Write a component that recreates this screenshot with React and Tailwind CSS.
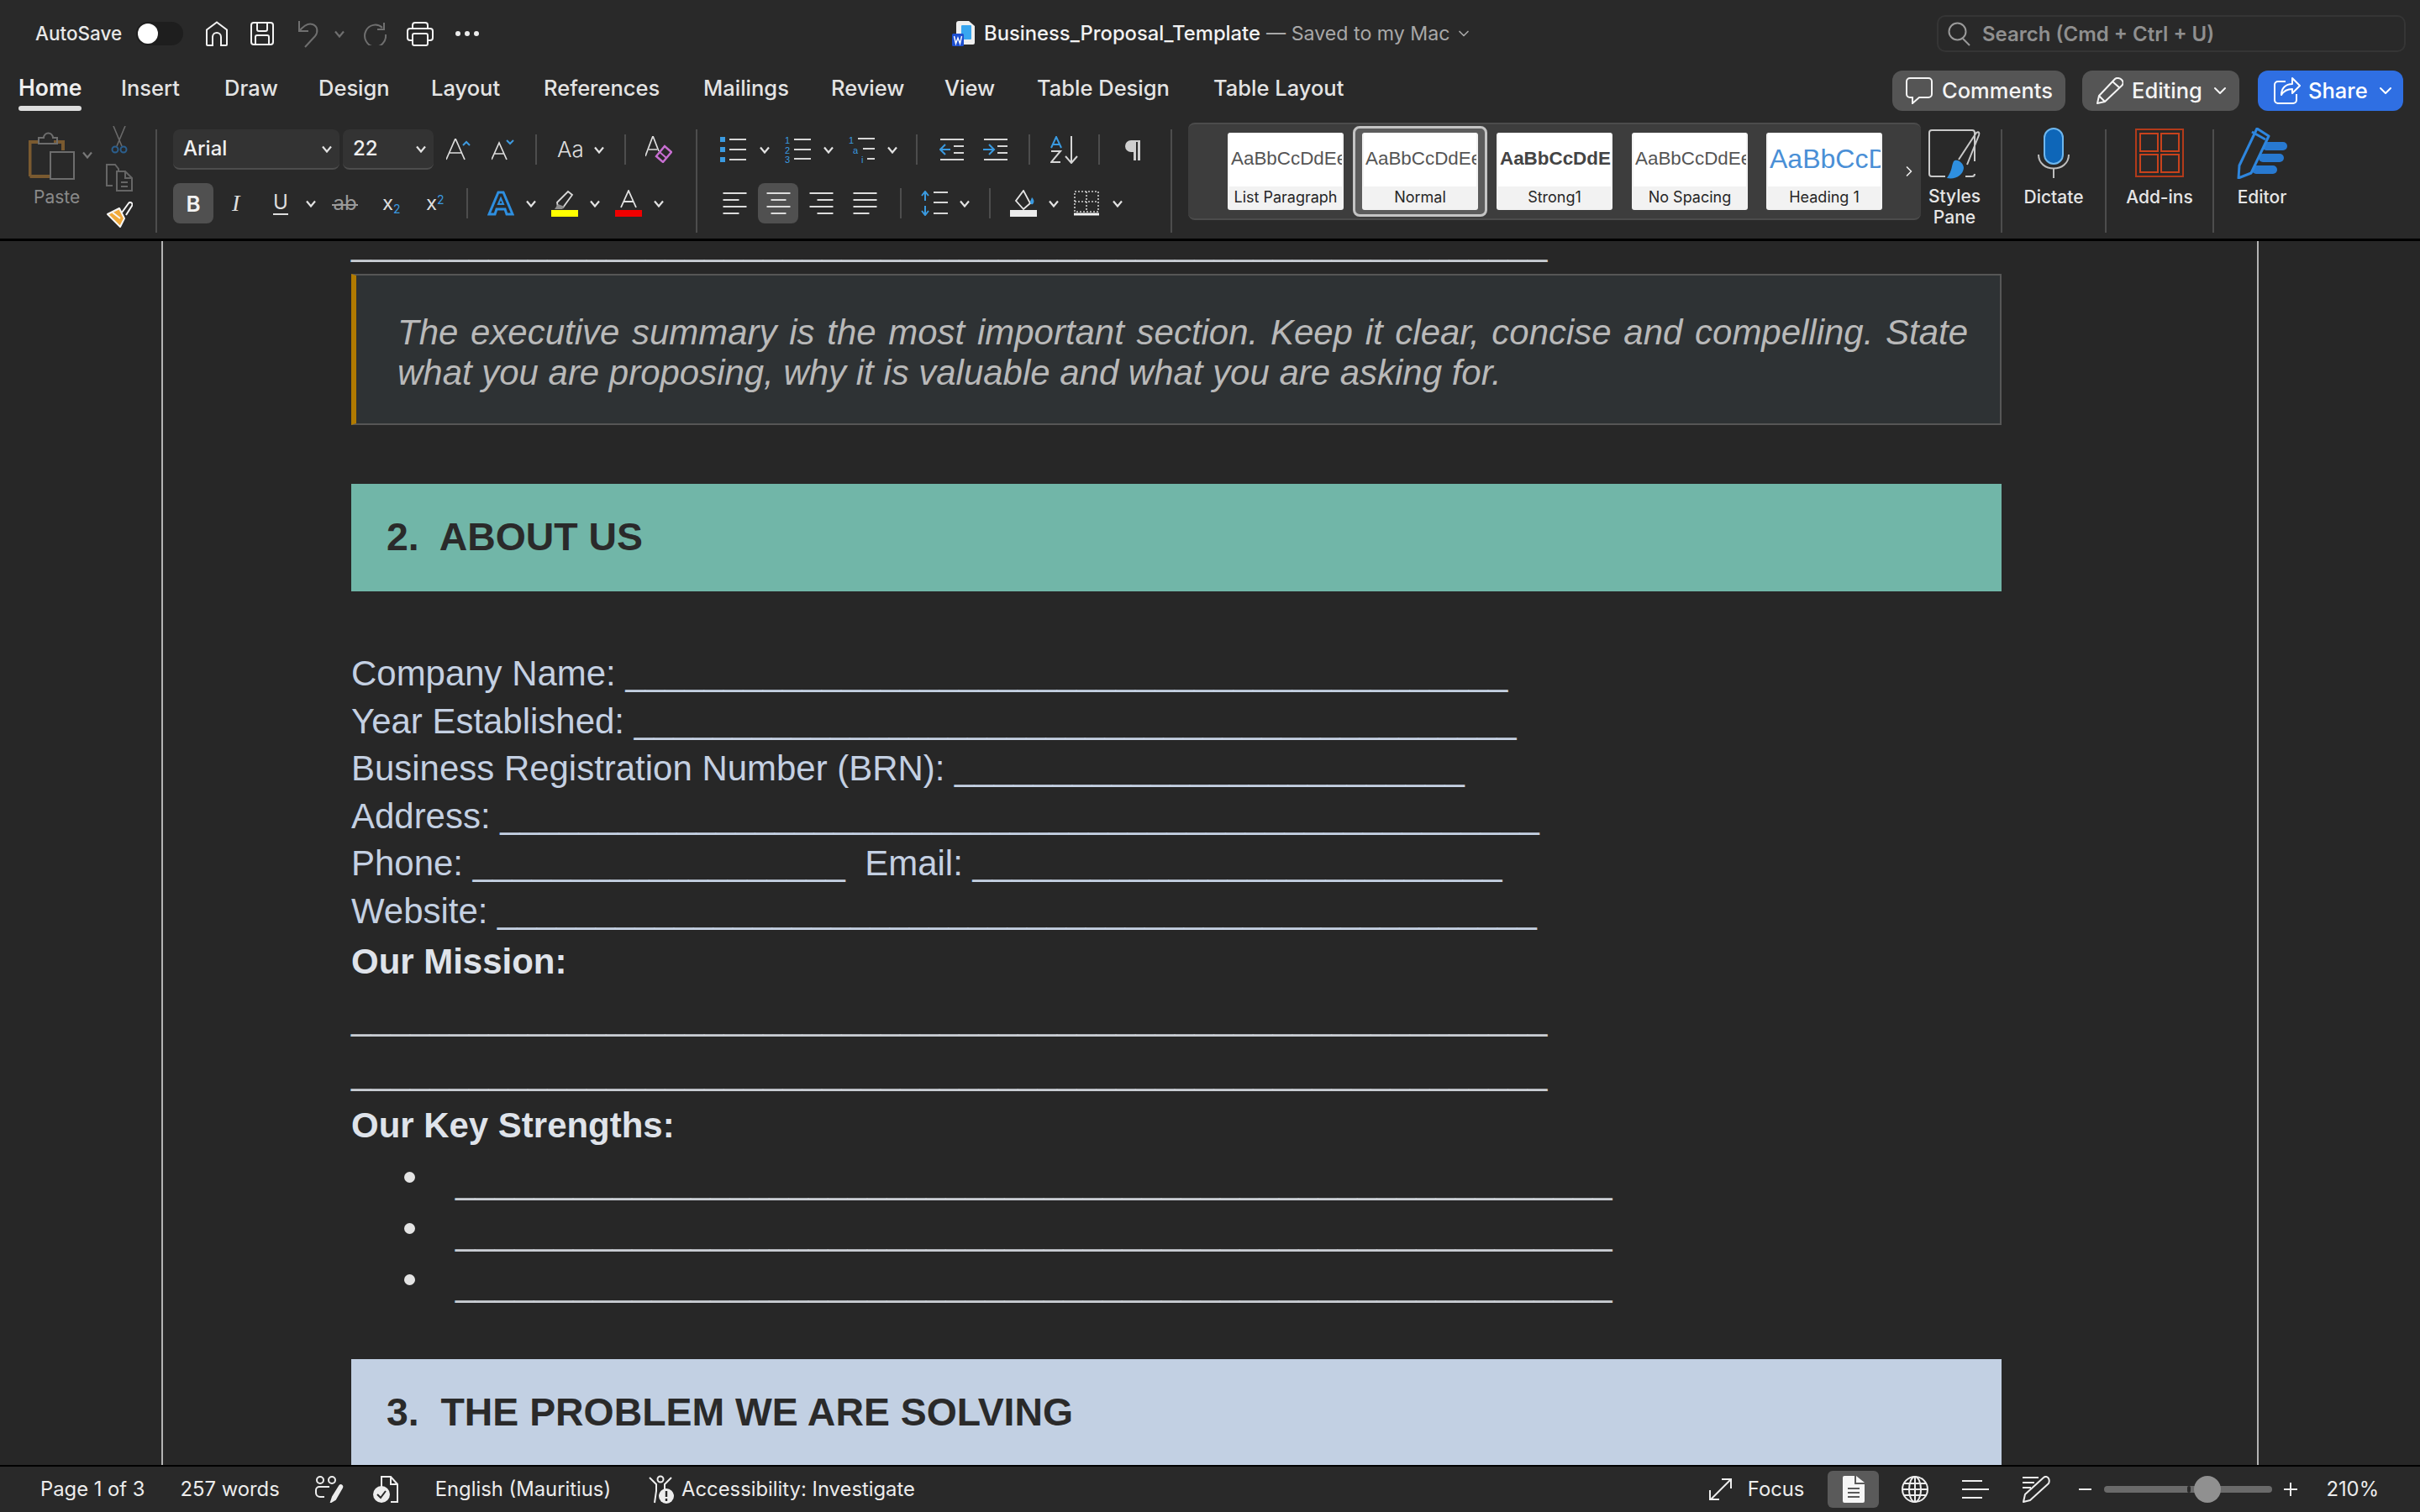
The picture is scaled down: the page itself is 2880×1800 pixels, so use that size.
import { ChevronDown, ChevronRight } from "lucide-react";

const ui = "font-['Inter','Liberation_Sans',sans-serif]";
const doc = "font-['Liberation_Sans','Arial',sans-serif]";

const Chev = ({ className = "", color = "#e2e2e2" }) => (
  <svg width="12" height="9" viewBox="0 0 12 9" className={`shrink-0 ${className}`} fill="none" stroke={color} strokeWidth="2.2">
    <path d="M1 1.5l5 6 5-6" />
  </svg>
);

const Vr = ({ className = "" }) => <div className={`w-[2px] shrink-0 bg-[#4d4d4d] ${className}`} />;

const HomeIcon = () => (
  <svg width="28" height="30" viewBox="0 0 28 30" fill="none" stroke="#f2f2f2" strokeWidth="2" className="ml-[26px]">
    <path d="M2 28V10.5L14 1.5l12 9V28a1 1 0 0 1-1 1h-6V19a5 5 0 0 0-10 0v10H3a1 1 0 0 1-1-1z" />
  </svg>
);
const SaveIcon = () => (
  <svg width="28" height="28" viewBox="0 0 28 28" fill="none" stroke="#f2f2f2" strokeWidth="2" className="ml-[26px]">
    <rect x="1" y="1" width="26" height="26" rx="3" />
    <path d="M8 1v8a2 2 0 0 0 2 2h8a2 2 0 0 0 2-2V1M6 27v-9a2 2 0 0 1 2-2h12a2 2 0 0 1 2 2v9" />
  </svg>
);
const UndoIcon = () => (
  <svg width="26" height="33" viewBox="0 0 26 33" fill="none" stroke="#6f6f6f" strokeWidth="2" className="ml-[28px]">
    <path d="M2 1v12h11M2 13C8 6 13 3 18 5c6 2 7 9 3 14L9 32" />
  </svg>
);
const RedoIcon = () => (
  <svg width="28" height="28" viewBox="0 0 28 28" fill="none" stroke="#6f6f6f" strokeWidth="2" className="ml-[22px]">
    <path d="M23 7a12.5 13 0 1 0 4 8M25 1v8h-8" />
  </svg>
);
const PrintIcon = () => (
  <svg width="32" height="29" viewBox="0 0 32 29" fill="none" stroke="#f2f2f2" strokeWidth="2" className="ml-[24px]">
    <path d="M7 8V4a3 3 0 0 1 3-3h12a3 3 0 0 1 3 3v4" />
    <path d="M7 22H4a3 3 0 0 1-3-3v-8a3 3 0 0 1 3-3h24a3 3 0 0 1 3 3v8a3 3 0 0 1-3 3h-3" />
    <rect x="7" y="14" width="18" height="14" rx="2" />
  </svg>
);
const WordIcon = () => (
  <svg width="27" height="30" viewBox="0 0 27 30" className="shrink-0">
    <path d="M5 3a3 3 0 0 1 3-3h12l7 6v20a2 2 0 0 1-2 2H5z" fill="#efefef" />
    <rect x="11" y="5" width="12" height="17" rx="1" fill="#38a6f0" />
    <rect x="0" y="15" width="14" height="15" rx="1.5" fill="#1d4fd0" />
    <path d="M2.5 18l2 9 2.5-7 2.5 7 2-9" fill="none" stroke="#fff" strokeWidth="1.4" />
  </svg>
);

const PasteIcon = () => (
  <svg width="56" height="60" viewBox="0 0 56 60" fill="none">
    <path d="M1.5 56V15h10M30 15h11v10M1.5 56H25" stroke="#7a5a30" strokeWidth="4" />
    <path d="M12 17v-7h6a5.5 5.5 0 0 1 11 0h5v7z" stroke="#6d6d6d" strokeWidth="2" />
    <rect x="26" y="27" width="28" height="32" stroke="#6d6d6d" strokeWidth="2" />
  </svg>
);
const CutIcon = () => (
  <svg width="20" height="33" viewBox="0 0 20 33" fill="none" strokeWidth="1.6">
    <path d="M3 0l10 24M17 0L7 24" stroke="#6a6a6a" />
    <circle cx="5" cy="28" r="3.5" stroke="#2b5f8e" strokeWidth="2" />
    <circle cx="15" cy="28" r="3.5" stroke="#2b5f8e" strokeWidth="2" />
  </svg>
);
const CopyIcon = () => (
  <svg width="32" height="33" viewBox="0 0 32 33" fill="none" stroke="#666" strokeWidth="2">
    <path d="M8 26H1V1h10l4 5v3" />
    <path d="M13 9h10l8 8v15H13zM23 9v8h8M18 22h8M18 27h8" />
  </svg>
);
const PainterIcon = () => (
  <svg width="32" height="31" viewBox="0 0 32 31">
    <path d="M2 15L16 8l6 12-5 10z" fill="#f0a93a" stroke="#f5f5f5" strokeWidth="2" strokeLinejoin="round" />
    <path d="M8 13l9 7" stroke="#f5f5f5" strokeWidth="2" />
    <path d="M19 13L27 2a2.5 2.5 0 0 1 4 3l-7 11" fill="none" stroke="#f5f5f5" strokeWidth="2" />
  </svg>
);

const GrowIcon = ({ down, className = "" }) => (
  <svg width={down ? 27 : 29} height="26" viewBox={down ? "0 0 27 26" : "0 0 29 26"} fill="none" className={className}>
    {down ? (
      <>
        <path d="M0 25L9 5l9 20M3.5 18h11" stroke="#dedede" strokeWidth="1.7" />
        <path d="M18 2l4 4 4-4" stroke="#3f9be0" strokeWidth="2" />
      </>
    ) : (
      <>
        <path d="M0 25L11 0l11 25M4 17h14" stroke="#dedede" strokeWidth="1.7" />
        <path d="M20 8l4-4 4 4" stroke="#3f9be0" strokeWidth="2" />
      </>
    )}
  </svg>
);
const ClearIcon = ({ className = "" }) => (
  <svg width="32" height="32" viewBox="0 0 32 32" fill="none" className={className}>
    <path d="M0 24L9 0l7 18M4 16h10" stroke="#dedede" strokeWidth="1.7" />
    <path d="M13 24L23 12l8 7-10 12z" stroke="#c86fd2" strokeWidth="2.4" />
    <path d="M17 19l8 7" stroke="#c86fd2" strokeWidth="2" />
  </svg>
);

const BulletIcon = ({ className = "" }) => (
  <svg width="31" height="30" viewBox="0 0 31 30" className={className}>
    <rect x="0" y="0" width="6" height="6" fill="#3a9ae0" />
    <rect x="0" y="12" width="6" height="6" fill="#3a9ae0" />
    <rect x="0" y="24" width="6" height="6" fill="#3a9ae0" />
    <path d="M11 3h20M11 15h20M11 27h20" stroke="#d6d6d6" strokeWidth="2" />
  </svg>
);
const NumberIcon = ({ className = "" }) => (
  <svg width="31" height="32" viewBox="0 0 31 32" className={className}>
    <text x="0" y="9" fontSize="11" fill="#3a9ae0" fontFamily="Liberation Sans">1</text>
    <text x="0" y="21" fontSize="11" fill="#3a9ae0" fontFamily="Liberation Sans">2</text>
    <text x="0" y="32" fontSize="11" fill="#3a9ae0" fontFamily="Liberation Sans">3</text>
    <path d="M11 4h20M11 16h20M11 27h20" stroke="#d6d6d6" strokeWidth="2" />
  </svg>
);
const MultiIcon = ({ className = "" }) => (
  <svg width="31" height="32" viewBox="0 0 31 32" className={className}>
    <text x="0" y="9" fontSize="11" fill="#3a9ae0" fontFamily="Liberation Sans">1</text>
    <text x="5" y="21" fontSize="11" fill="#3a9ae0" fontFamily="Liberation Sans">a</text>
    <text x="15" y="32" fontSize="11" fill="#3a9ae0" fontFamily="Liberation Sans">i</text>
    <path d="M11 3h20M17 15h14M22 27h9" stroke="#d6d6d6" strokeWidth="2" />
  </svg>
);
const IndentIcon = ({ inc, className = "" }) => (
  <svg width="29" height="28" viewBox="0 0 29 28" fill="none" className={className}>
    <path d="M1 2h28M17 10h12M17 18h12M1 26h28" stroke="#d6d6d6" strokeWidth="2" />
    {inc ? (
      <path d="M0 14h12M7 8l6 6-6 6" stroke="#3a9ae0" strokeWidth="2" />
    ) : (
      <path d="M13 14H1M7 8l-6 6 6 6" stroke="#3a9ae0" strokeWidth="2" />
    )}
  </svg>
);
const SortIcon = ({ className = "" }) => (
  <svg width="33" height="33" viewBox="0 0 33 33" fill="none" className={className}>
    <path d="M1 14L7 1l6 13M3 10h8" stroke="#3a9ae0" strokeWidth="2" />
    <path d="M1 18h11L1 31h11" stroke="#d6d6d6" strokeWidth="2" />
    <path d="M25 0v31M18 24l7 8 7-8" stroke="#d6d6d6" strokeWidth="2" />
  </svg>
);
const Pilcrow = ({ className = "" }) => (
  <svg width="20" height="25" viewBox="0 0 20 25" className={className}>
    <path d="M19 1H8a7 7 0 0 0 0 14h3v10h3V3h2v22h3z" fill="#cfcfcf" />
  </svg>
);
const AlignIcon = ({ mode, className = "" }) => {
  const paths = {
    left: "M0 2h28M0 10h19M0 18h28M0 26h19",
    center: "M0 2h28M5 10h18M0 18h28M5 26h18",
    right: "M0 2h28M9 10h19M0 18h28M9 26h19",
    justify: "M0 2h28M0 10h28M0 18h28M0 26h19",
  };
  return (
    <svg width="29" height="28" viewBox="0 0 28 28" fill="none" stroke="#dcdcdc" strokeWidth="2" className={className}>
      <path d={paths[mode]} />
    </svg>
  );
};
const SpacingIcon = ({ className = "" }) => (
  <svg width="32" height="30" viewBox="0 0 32 30" fill="none" className={className}>
    <path d="M15 2h17M15 14h17M15 27h17" stroke="#d6d6d6" strokeWidth="2" />
    <path d="M5 1v11M1 6l4-5 4 5M5 18v11M1 24l4 5 4-5" stroke="#3a9ae0" strokeWidth="2" />
  </svg>
);
const ShadingIcon = ({ className = "" }) => (
  <svg width="32" height="32" viewBox="0 0 32 32" fill="none" className={className}>
    <path d="M16 1l8 15-8 7-9-10z" stroke="#e6e6e6" strokeWidth="1.8" />
    <path d="M26 9c3 3 3 6 1 8-2 1-3-1-3-3z" fill="#3a9ae0" />
    <rect x="0" y="24" width="32" height="8" fill="#ececec" />
  </svg>
);
const BorderIcon = ({ className = "" }) => (
  <svg width="30" height="30" viewBox="0 0 30 30" fill="none" className={className}>
    <rect x="1" y="1" width="28" height="24" stroke="#cfcfcf" strokeWidth="1.6" strokeDasharray="2 2" />
    <path d="M15 1v24M1 13h28" stroke="#cfcfcf" strokeWidth="1.6" strokeDasharray="2 2" />
    <path d="M0 28h30" stroke="#f2f2f2" strokeWidth="3" />
  </svg>
);
const TextFx = ({ className = "" }) => (
  <svg width="32" height="30" viewBox="0 0 32 30" fill="none" className={className}>
    <path d="M2 28L13 2h6l11 26h-7l-2-6H11l-2 6z" stroke="#2e8fe0" strokeWidth="3" />
    <path d="M13 16l3-7 3 7z" stroke="#2e8fe0" strokeWidth="2" />
  </svg>
);
const Highlight = ({ className = "" }) => (
  <svg width="34" height="32" viewBox="0 0 34 32" fill="none" className={className}>
    <path d="M8 15L21 2l5 4-11 15H9z" stroke="#d8d8d8" strokeWidth="1.8" />
    <path d="M9 17l-4 6h9l3-3z" fill="#8d8d8d" />
    <rect x="1" y="24" width="32" height="8" fill="#ffff00" />
  </svg>
);
const FontColor = ({ className = "" }) => (
  <svg width="32" height="32" viewBox="0 0 32 32" fill="none" className={className}>
    <path d="M7 21L16 1l9 20M10 14h12" stroke="#e2e2e2" strokeWidth="1.8" />
    <rect x="0" y="24" width="32" height="8" fill="#f00000" />
  </svg>
);
const StylesIcon = () => (
  <svg width="62" height="60" viewBox="0 0 62 60" fill="none">
    <path d="M20 56H4a3 3 0 0 1-3-3V4a3 3 0 0 1 3-3h48a3 3 0 0 1 3 3v34M44 56h8a3 3 0 0 0 3-3" stroke="#c9c9c9" strokeWidth="2" />
    <path d="M36 36L57 4c3-2 4 0 3 3L46 42" stroke="#c9c9c9" strokeWidth="2" />
    <path d="M30 38c-3 6-1 10-8 20 10 2 19-3 20-12 0-6-8-12-12-8z" fill="#2e8fe0" />
  </svg>
);
const MicIcon = () => (
  <svg width="38" height="60" viewBox="0 0 38 60" fill="none">
    <rect x="8" y="1" width="22" height="42" rx="11" fill="#0e66b8" stroke="#6fb7ee" strokeWidth="2" />
    <path d="M1 32c0 22 36 22 36 0M19 48v12" stroke="#bdbdbd" strokeWidth="2" />
  </svg>
);
const AddinsIcon = () => (
  <svg width="58" height="58" viewBox="0 0 58 58" fill="none">
    <rect x="1" y="1" width="56" height="56" stroke="#b23a1a" strokeWidth="2" />
    <rect x="6" y="6" width="21" height="21" stroke="#c8421c" strokeWidth="2" />
    <rect x="31" y="6" width="21" height="21" stroke="#c8421c" strokeWidth="2" />
    <rect x="6" y="31" width="21" height="21" stroke="#c8421c" strokeWidth="2" />
    <rect x="31" y="31" width="21" height="21" stroke="#c8421c" strokeWidth="2" />
  </svg>
);
const EditorIcon = () => (
  <svg width="60" height="61" viewBox="0 0 60 61" fill="none">
    <rect x="30" y="17" width="30" height="10" rx="5" fill="#2879d0" />
    <rect x="26" y="31" width="30" height="10" rx="5" fill="#2879d0" />
    <rect x="18" y="45" width="30" height="10" rx="5" fill="#2879d0" />
    <path d="M2 60L3 45 24 1l14 9-21 44z" fill="#292929" stroke="#2e86de" strokeWidth="3" strokeLinejoin="round" />
    <path d="M18 5l16 9" stroke="#2e86de" strokeWidth="3" />
  </svg>
);
const CommentIcon = () => (
  <svg width="32" height="32" viewBox="0 0 32 32" fill="none" stroke="#f4f4f4" strokeWidth="2" className="shrink-0">
    <path d="M5 1h22a4 4 0 0 1 4 4v15a4 4 0 0 1-4 4H16l-8 7v-7H5a4 4 0 0 1-4-4V5a4 4 0 0 1 4-4z" />
  </svg>
);
const PencilIcon = () => (
  <svg width="32" height="32" viewBox="0 0 32 32" fill="none" stroke="#f4f4f4" strokeWidth="2" strokeLinejoin="round" className="shrink-0">
    <path d="M1 31l2-9L22 2c2-2 6-1 8 1s2 5 0 7L10 29zM19 5l9 8M3 22l7 7" />
  </svg>
);
const ShareIcon = () => (
  <svg width="32" height="32" viewBox="0 0 32 32" fill="none" stroke="#fff" strokeWidth="2" strokeLinejoin="round" className="shrink-0">
    <path d="M14 5H5a4 4 0 0 0-4 4v18a4 4 0 0 0 4 4h18a4 4 0 0 0 4-4v-7" />
    <path d="M22 1l9 9-9 9v-5c-6 0-10 2-13 7 0-8 5-13 13-13z" />
  </svg>
);
const SearchIcon = () => (
  <svg width="27" height="29" viewBox="0 0 27 29" fill="none" stroke="#9a9a9a" strokeWidth="2">
    <circle cx="11.5" cy="11.5" r="10" />
    <path d="M18 20l8 8" />
  </svg>
);

const TrackIcon = () => (
  <svg width="34" height="32" viewBox="0 0 34 32" fill="none" stroke="#ededed" strokeWidth="2">
    <circle cx="6" cy="5" r="4" />
    <circle cx="20" cy="5" r="4" />
    <path d="M17 13H5a4 4 0 0 0-4 4v3a5 5 0 0 0 5 5h5" />
    <path d="M19 31l2-6 8-13c2-2 4 0 3 2l-8 14z" fill="#ededed" />
  </svg>
);
const SpellIcon = () => (
  <svg width="30" height="32" viewBox="0 0 30 32" fill="none">
    <path d="M10 15V1h11l8 9v21h-8M21 1v9h8" stroke="#ededed" strokeWidth="2" />
    <circle cx="10" cy="22" r="10" fill="#ededed" />
    <path d="M5 22l4 4 6-8" stroke="#292929" strokeWidth="2" />
  </svg>
);
const AccessIcon = () => (
  <svg width="32" height="34" viewBox="0 0 32 34" fill="none">
    <circle cx="15" cy="5" r="3.5" stroke="#ededed" strokeWidth="2" />
    <path d="M2 3l8 8v8l-2 14M28 3l-8 8v6" stroke="#ededed" strokeWidth="2" />
    <circle cx="22" cy="25" r="9" fill="#ededed" />
    <path d="M22 19v7M22 28v3" stroke="#292929" strokeWidth="2.4" />
  </svg>
);
const FocusIcon = () => (
  <svg width="27" height="26" viewBox="0 0 27 26" fill="none" stroke="#ededed" strokeWidth="2">
    <path d="M2 25L25 2M15 1h11v11M1 14v11h11" />
  </svg>
);
const PageIcon = () => (
  <svg width="26" height="32" viewBox="0 0 26 32">
    <path d="M2 0h12v10h12v20a2 2 0 0 1-2 2H2a2 2 0 0 1-2-2V2a2 2 0 0 1 2-2z" fill="#f6f6f6" />
    <path d="M16 0l10 8H16z" fill="#f6f6f6" />
    <path d="M6 15h14M6 20h14M6 25h14" stroke="#5a5a5a" strokeWidth="2" />
  </svg>
);
const GlobeIcon = () => (
  <svg width="32" height="32" viewBox="0 0 32 32" fill="none" stroke="#ededed" strokeWidth="2">
    <circle cx="16" cy="16" r="15" />
    <ellipse cx="16" cy="16" rx="7" ry="15" />
    <path d="M16 1v30M3 9h26M1 16h30M3 23h26" />
  </svg>
);
const OutlineIcon = () => (
  <svg width="33" height="24" viewBox="0 0 33 24" fill="none" stroke="#ededed" strokeWidth="2">
    <path d="M1 2h24M1 12h33M1 22h24" />
  </svg>
);
const DraftIcon = () => (
  <svg width="33" height="32" viewBox="0 0 33 32" fill="none" stroke="#ededed" strokeWidth="2" strokeLinejoin="round">
    <path d="M0 2h19M0 8h14M0 14h10M1 31l2-9L25 2c2-2 5-1 6 1s1 4 0 6L9 29z" />
  </svg>
);

// fixed tab slots, the labels start where the reference's start
const tabs = [
  ["Insert", "w-[123px]"],
  ["Draw", "w-[112px]"],
  ["Design", "w-[134px]"],
  ["Layout", "w-[134px]"],
  ["References", "w-[190px]"],
  ["Mailings", "w-[152px]"],
  ["Review", "w-[135px]"],
  ["View", "w-[110px]"],
  ["Table Design", "w-[210px]"],
  ["Table Layout", "w-[170px]"],
];

const StyleCard = ({ preview, label, previewClass }) => (
  <div className="flex h-[92px] w-[138px] flex-col overflow-hidden rounded-[3px] bg-[#f2f2f2]">
    <div className="mx-[2px] flex h-[64px] items-center justify-start overflow-hidden whitespace-nowrap bg-white pb-[2px] pl-[2px]">
      <span className={`${doc} ${previewClass}`}>{preview}</span>
    </div>
    <div className="flex-1 whitespace-nowrap text-center text-[18px] leading-[26px] text-[#262626]">{label}</div>
  </div>
);

const Underscores = ({ n }) => "_".repeat(n);

const Heading = ({ children, className = "" }) => (
  <div className={`flex h-[128px] shrink-0 items-center whitespace-pre pl-[42px] text-[46.4px] font-bold text-[#2a2a2a] ${className}`}>
    {children}
  </div>
);

const Line = ({ children, className = "" }) => (
  <p className={`whitespace-pre leading-[56.5px] ${className}`}>{children}</p>
);

const Bullet = ({ className = "" }) => (
  <div className={`flex h-[56px] pl-[63px] ${className}`}>
    <div className="mt-[16px] h-[13px] w-[13px] shrink-0 rounded-full bg-[#e4e4e4]" />
    <span className="ml-[48px] whitespace-pre leading-[56px] text-[#c9cdd3]">
      <Underscores n={59} />
    </span>
  </div>
);

export default function App() {
  return (
    <div className={`${ui} flex h-[1800px] w-[2880px] flex-col overflow-hidden bg-[#292929] text-[#e6e6e6]`}>
      {/* title bar */}
      <div className="flex h-[80px] shrink-0 items-center">
        <span className="ml-[42px] w-[101px] whitespace-nowrap text-[22.5px] font-medium text-[#e8e8e8]">AutoSave</span>
        <div className="ml-[19px] flex h-[28px] w-[56px] items-center rounded-full bg-[#1e1e1e] pl-[2px]">
          <div className="h-[24px] w-[24px] rounded-full bg-white" />
        </div>
        <HomeIcon />
        <SaveIcon />
        <UndoIcon />
        <Chev className="ml-[18px]" color="#6f6f6f" />
        <RedoIcon />
        <PrintIcon />
        <div className="ml-[26px] flex gap-[5px]">
          <div className="h-[6px] w-[6px] rounded-full bg-[#ececec]" />
          <div className="h-[6px] w-[6px] rounded-full bg-[#ececec]" />
          <div className="h-[6px] w-[6px] rounded-full bg-[#ececec]" />
        </div>
        <div className="ml-[563px] flex items-center">
          <WordIcon />
          <span className="ml-[11px] whitespace-nowrap text-[23.8px] font-medium text-[#f2f2f2]">Business_Proposal_Template</span>
          <span className="ml-[7px] whitespace-nowrap text-[23.2px] text-[#a8a8a8]">— Saved to my Mac</span>
          <ChevronDown size={20} className="ml-[6px] text-[#a8a8a8]" />
        </div>
        <div className="ml-auto mr-[17px] flex h-[44px] w-[558px] items-center rounded-[10px] border-2 border-[#353535] pl-[11px]">
          <SearchIcon />
          <span className="ml-[14px] mt-[2px] text-[24px] font-semibold text-[#8f8f8f]">Search (Cmd + Ctrl + U)</span>
        </div>
      </div>

      {/* tabs */}
      <div className="flex h-[60px] shrink-0 items-center pb-[10px]">
        <div className="ml-[22px] w-[122px] shrink-0">
          <div className="relative inline-block text-[26.5px] font-semibold text-[#efefef]">
            Home
            <div className="absolute -bottom-[7px] left-0 right-0 h-[6px] rounded-full bg-[#dedede]" />
          </div>
        </div>
        {tabs.map(([t, cls]) => (
          <span key={t} className={`${cls} shrink-0 whitespace-nowrap text-[25.5px] font-medium text-[#e4e4e4]`}>{t}</span>
        ))}
        <div className="ml-auto mr-[20px] mt-[4px] flex items-center self-start">
          <button className="flex h-[48px] w-[206px] items-center rounded-[12px] bg-[#555555] pl-[16px] text-[25.5px] font-medium text-[#f4f4f4]">
            <CommentIcon />
            <span className="ml-[11px]">Comments</span>
          </button>
          <button className="ml-[20px] flex h-[48px] w-[187px] items-center rounded-[12px] bg-[#555555] pl-[17px] text-[25.5px] font-medium text-[#f4f4f4]">
            <PencilIcon />
            <span className="ml-[10px]">Editing</span>
            <ChevronDown size={24} className="ml-[9px]" />
          </button>
          <button className="ml-[22px] flex h-[48px] w-[173px] items-center rounded-[12px] bg-[#2f6fe3] pl-[19px] text-[25.5px] font-medium text-white">
            <ShareIcon />
            <span className="ml-[9px]">Share</span>
            <ChevronDown size={24} className="ml-[9px]" />
          </button>
        </div>
      </div>

      {/* ribbon */}
      <div className="flex h-[144px] shrink-0 items-start text-[#e2e2e2]">
        {/* clipboard */}
        <div className="flex w-[185px] shrink-0">
          <div className="ml-[34px] mt-[14px] flex w-[92px] flex-col">
            <div className="flex items-center">
              <PasteIcon />
              <Chev className="ml-[8px]" color="#777777" />
            </div>
            <span className="ml-[6px] mt-[8px] text-[21px] leading-[26px] text-[#8a8a8a]">Paste</span>
          </div>
          <div className="mt-[10px] flex w-[32px] flex-col items-center gap-[12px]">
            <CutIcon />
            <CopyIcon />
            <PainterIcon />
          </div>
        </div>
        <Vr className="mt-[14px] h-[123px]" />

        {/* font */}
        <div className="ml-[19px] mt-[14px] flex w-[622px] shrink-0 flex-col gap-[16px]">
          <div className="flex h-[48px] items-center">
            <div className="flex h-[48px] w-[198px] items-center justify-between rounded-[8px] border-b-2 border-[#4d4d4d] bg-[#333333] pl-[12px] pr-[9px]">
              <span className="text-[24px] font-medium text-[#f0f0f0]">Arial</span>
              <Chev />
            </div>
            <div className="ml-[4px] flex h-[48px] w-[108px] items-center justify-between rounded-[8px] border-b-2 border-[#4d4d4d] bg-[#333333] pl-[12px] pr-[9px]">
              <span className="text-[24px] font-medium text-[#f0f0f0]">22</span>
              <Chev />
            </div>
            <GrowIcon className="ml-[15px]" />
            <GrowIcon down className="ml-[25px]" />
            <Vr className="ml-[25px] h-[36px]" />
            <span className={`${ui} ml-[24px] w-[32px] text-[26px] font-light leading-none text-[#dedede]`}>Aa</span>
            <Chev className="ml-[12px]" />
            <Vr className="ml-[24px] h-[36px]" />
            <ClearIcon className="ml-[23px]" />
          </div>
          <div className="flex h-[48px] items-center">
            <div className={`${ui} flex h-[48px] w-[48px] items-center justify-center rounded-[8px] bg-[#505050] text-[26px] font-semibold text-[#f2f2f2]`}>B</div>
            <span className="ml-[22px] w-[15px] font-['Liberation_Serif',serif] text-[28px] italic text-[#dedede]">I</span>
            <span className="ml-[34px] w-[18px] border-b-2 border-[#dedede] text-center text-[24px] leading-[26px] text-[#dedede]">U</span>
            <Chev className="ml-[21px]" />
            <span className="relative ml-[19px] w-[31px] text-center text-[24px] leading-[28px] text-[#9a9a9a]">
              ab
              <span className="absolute left-0 right-0 top-[15px] h-[2px] bg-[#9a9a9a]" />
            </span>
            <span className="ml-[29px] w-[23px] text-[24px] text-[#dedede]">
              x<sub className="text-[14px] text-[#3a9ae0]">2</sub>
            </span>
            <span className="ml-[29px] w-[23px] text-[24px] text-[#dedede]">
              x<sup className="text-[14px] text-[#3a9ae0]">2</sup>
            </span>
            <Vr className="ml-[25px] h-[36px]" />
            <TextFx className="ml-[23px]" />
            <Chev className="ml-[14px]" />
            <Highlight className="ml-[17px]" />
            <Chev className="ml-[13px]" />
            <FontColor className="ml-[18px]" />
            <Chev className="ml-[14px]" />
          </div>
        </div>
        <Vr className="mt-[14px] h-[123px]" />

        {/* paragraph */}
        <div className="ml-[27px] mt-[14px] flex w-[536px] shrink-0 flex-col gap-[16px]">
          <div className="flex h-[48px] items-center">
            <BulletIcon />
            <Chev className="ml-[16px]" />
            <NumberIcon className="ml-[18px]" />
            <Chev className="ml-[15px]" />
            <MultiIcon className="ml-[18px]" />
            <Chev className="ml-[15px]" />
            <Vr className="ml-[22px] h-[36px]" />
            <IndentIcon className="ml-[26px]" />
            <IndentIcon inc className="ml-[23px]" />
            <Vr className="ml-[25px] h-[36px]" />
            <SortIcon className="ml-[24px]" />
            <Vr className="ml-[24px] h-[36px]" />
            <Pilcrow className="ml-[29px]" />
          </div>
          <div className="flex h-[48px] items-center">
            <AlignIcon mode="left" className="ml-[3px]" />
            <div className="ml-[13px] flex h-[48px] w-[48px] items-center justify-center rounded-[8px] bg-[#505050]">
              <AlignIcon mode="center" />
            </div>
            <AlignIcon mode="right" className="ml-[13px]" />
            <AlignIcon mode="justify" className="ml-[23px]" />
            <Vr className="ml-[27px] h-[36px]" />
            <SpacingIcon className="ml-[23px]" />
            <Chev className="ml-[14px]" />
            <Vr className="ml-[23px] h-[36px]" />
            <ShadingIcon className="ml-[23px]" />
            <Chev className="ml-[14px]" />
            <BorderIcon className="ml-[18px]" />
            <Chev className="ml-[16px]" />
          </div>
        </div>
        <Vr className="mt-[14px] h-[123px]" />

        {/* styles gallery */}
        <div className="ml-[19px] mt-[6px] flex h-[116px] w-[872px] shrink-0 items-center rounded-[8px] border-t-2 border-b-2 border-[#4c4c4c] bg-[#3d3d3d] pl-[47px]">
          <StyleCard preview="AaBbCcDdEe" label="List Paragraph" previewClass="text-[22.4px] text-[#555555]" />
          <div className="ml-[11px] flex h-[108px] w-[160px] items-center justify-center rounded-[8px] border-[3px] border-[#c4c4c4] bg-[#5c5c5c]">
            <StyleCard preview="AaBbCcDdEe" label="Normal" previewClass="text-[22.4px] text-[#555555]" />
          </div>
          <div className="ml-[11px]">
            <StyleCard preview="AaBbCcDdEe" label="Strong1" previewClass="text-[22.4px] font-bold text-[#444444]" />
          </div>
          <div className="ml-[23px]">
            <StyleCard preview="AaBbCcDdEe" label="No Spacing" previewClass="text-[22.4px] text-[#555555]" />
          </div>
          <div className="ml-[22px]">
            <StyleCard preview="AaBbCcDd" label="Heading 1" previewClass="text-[32px] text-[#4a8fd6]" />
          </div>
          <ChevronRight size={20} className="ml-[22px] text-[#eeeeee]" />
        </div>

        {/* big buttons */}
        <div className="ml-[10px] mt-[14px] flex w-[60px] shrink-0 flex-col items-center">
          <StylesIcon />
          <span className="mt-[8px] whitespace-nowrap text-center text-[21px] font-medium leading-[24.5px] text-[#e6e6e6]">Styles<br />Pane</span>
        </div>
        <Vr className="ml-[25px] mt-[14px] h-[123px]" />
        <div className="mt-[12px] flex w-[122px] shrink-0 flex-col items-center">
          <MicIcon />
          <span className="mt-[11px] text-[21px] font-medium leading-[24px] text-[#e6e6e6]">Dictate</span>
        </div>
        <Vr className="mt-[14px] h-[123px]" />
        <div className="mt-[13px] flex w-[126px] shrink-0 flex-col items-center">
          <AddinsIcon />
          <span className="mt-[12px] text-[21px] font-medium leading-[24px] text-[#e6e6e6]">Add-ins</span>
        </div>
        <Vr className="mt-[14px] h-[123px]" />
        <div className="ml-[27px] mt-[12px] flex w-[60px] shrink-0 flex-col items-center">
          <EditorIcon />
          <span className="mt-[10px] text-[21px] font-medium leading-[24px] text-[#e6e6e6]">Editor</span>
        </div>
      </div>

      {/* document */}
      <div className="h-[3px] shrink-0 bg-black" />
      <div className={`${doc} min-h-0 flex-1 overflow-hidden bg-[#272727]`}>
        <div className="ml-[192px] h-full w-[2496px] border-x-2 border-[#b4b4b4] pl-[224px] pr-[304px] text-[41.96px] text-[#c4d0e2]">
          <div className="flex flex-col">
            <p className="-mt-[21px] whitespace-pre leading-[48px] text-[#c9cdd3]"><Underscores n={61} /></p>

            <div className="mt-[12px] h-[180px] border-2 border-l-[6px] border-[#565656] border-l-[#b07a00] bg-[#2e3234] pl-[49px] pr-[38px] pt-[44px]">
              <p className="text-justify italic leading-[48px] text-[#b9b9b9]">
                The executive summary is the most important section. Keep it clear, concise and compelling. State what you are proposing, why it is valuable and what you are asking for.
              </p>
            </div>

            <Heading className="mt-[70px] bg-[#71b6a8]">{"2.  ABOUT US"}</Heading>

            <div className="mt-[70px]">
              <Line>Company Name: <Underscores n={45} /></Line>
              <Line>Year Established: <Underscores n={45} /></Line>
              <Line>Business Registration Number (BRN): <Underscores n={26} /></Line>
              <Line>Address: <Underscores n={53} /></Line>
              <Line>Phone: <Underscores n={19} />{"  "}Email: <Underscores n={27} /></Line>
              <Line>Website: <Underscores n={53} /></Line>
            </div>

            <p className="mt-[4px] font-bold leading-[56px] text-[#dfe3ea]">Our Mission:</p>
            <p className="mt-[11px] whitespace-pre leading-[56px] text-[#c9cdd3]"><Underscores n={61} /></p>
            <p className="mt-[9px] whitespace-pre leading-[56px] text-[#c9cdd3]"><Underscores n={61} /></p>
            <p className="mt-[7px] font-bold leading-[56px] text-[#dfe3ea]">Our Key Strengths:</p>

            <Bullet className="mt-[11px]" />
            <Bullet className="mt-[5px]" />
            <Bullet className="mt-[5px]" />

            <Heading className="mt-[61px] bg-[#c2d0e3]">{"3.  THE PROBLEM WE ARE SOLVING"}</Heading>
          </div>
        </div>
      </div>

      {/* status bar */}
      <div className="h-[2px] shrink-0 bg-black" />
      <div className="flex h-[54px] shrink-0 items-center text-[23.8px] text-[#ececec]">
        <span className="ml-[48px]">Page 1 of 3</span>
        <span className="ml-[42px]">257 words</span>
        <div className="ml-[42px]"><TrackIcon /></div>
        <div className="ml-[35px]"><SpellIcon /></div>
        <span className="ml-[44px]">English (Mauritius)</span>
        <div className="ml-[44px]"><AccessIcon /></div>
        <span className="ml-[8px]">Accessibility: Investigate</span>

        <div className="ml-auto flex items-center pr-[49px]">
          <FocusIcon />
          <span className="ml-[19px]">Focus</span>
          <div className="ml-[28px] flex h-[44px] w-[61px] items-center justify-center rounded-[6px] bg-[#5a5a5a]">
            <PageIcon />
          </div>
          <div className="ml-[27px]"><GlobeIcon /></div>
          <div className="ml-[39px]"><OutlineIcon /></div>
          <div className="ml-[40px]"><DraftIcon /></div>
          <span className="ml-[34px] h-[2px] w-[15px] bg-[#ececec]" />
          <div className="relative ml-[15px] flex h-[8px] w-[200px] items-center rounded-full bg-[#6a6a6a]">
            <div className="absolute left-[99px] h-[8px] w-[4px] rounded-full bg-[#292929]" />
            <div className="absolute left-[107px] h-[32px] w-[32px] rounded-full bg-[#909090]" />
          </div>
          <span className="relative ml-[14px] h-[16px] w-[16px]">
            <span className="absolute left-0 top-[7px] h-[2px] w-[16px] bg-[#ececec]" />
            <span className="absolute left-[7px] top-0 h-[16px] w-[2px] bg-[#ececec]" />
          </span>
          <span className="ml-[34px]">210%</span>
        </div>
      </div>
    </div>
  );
}
